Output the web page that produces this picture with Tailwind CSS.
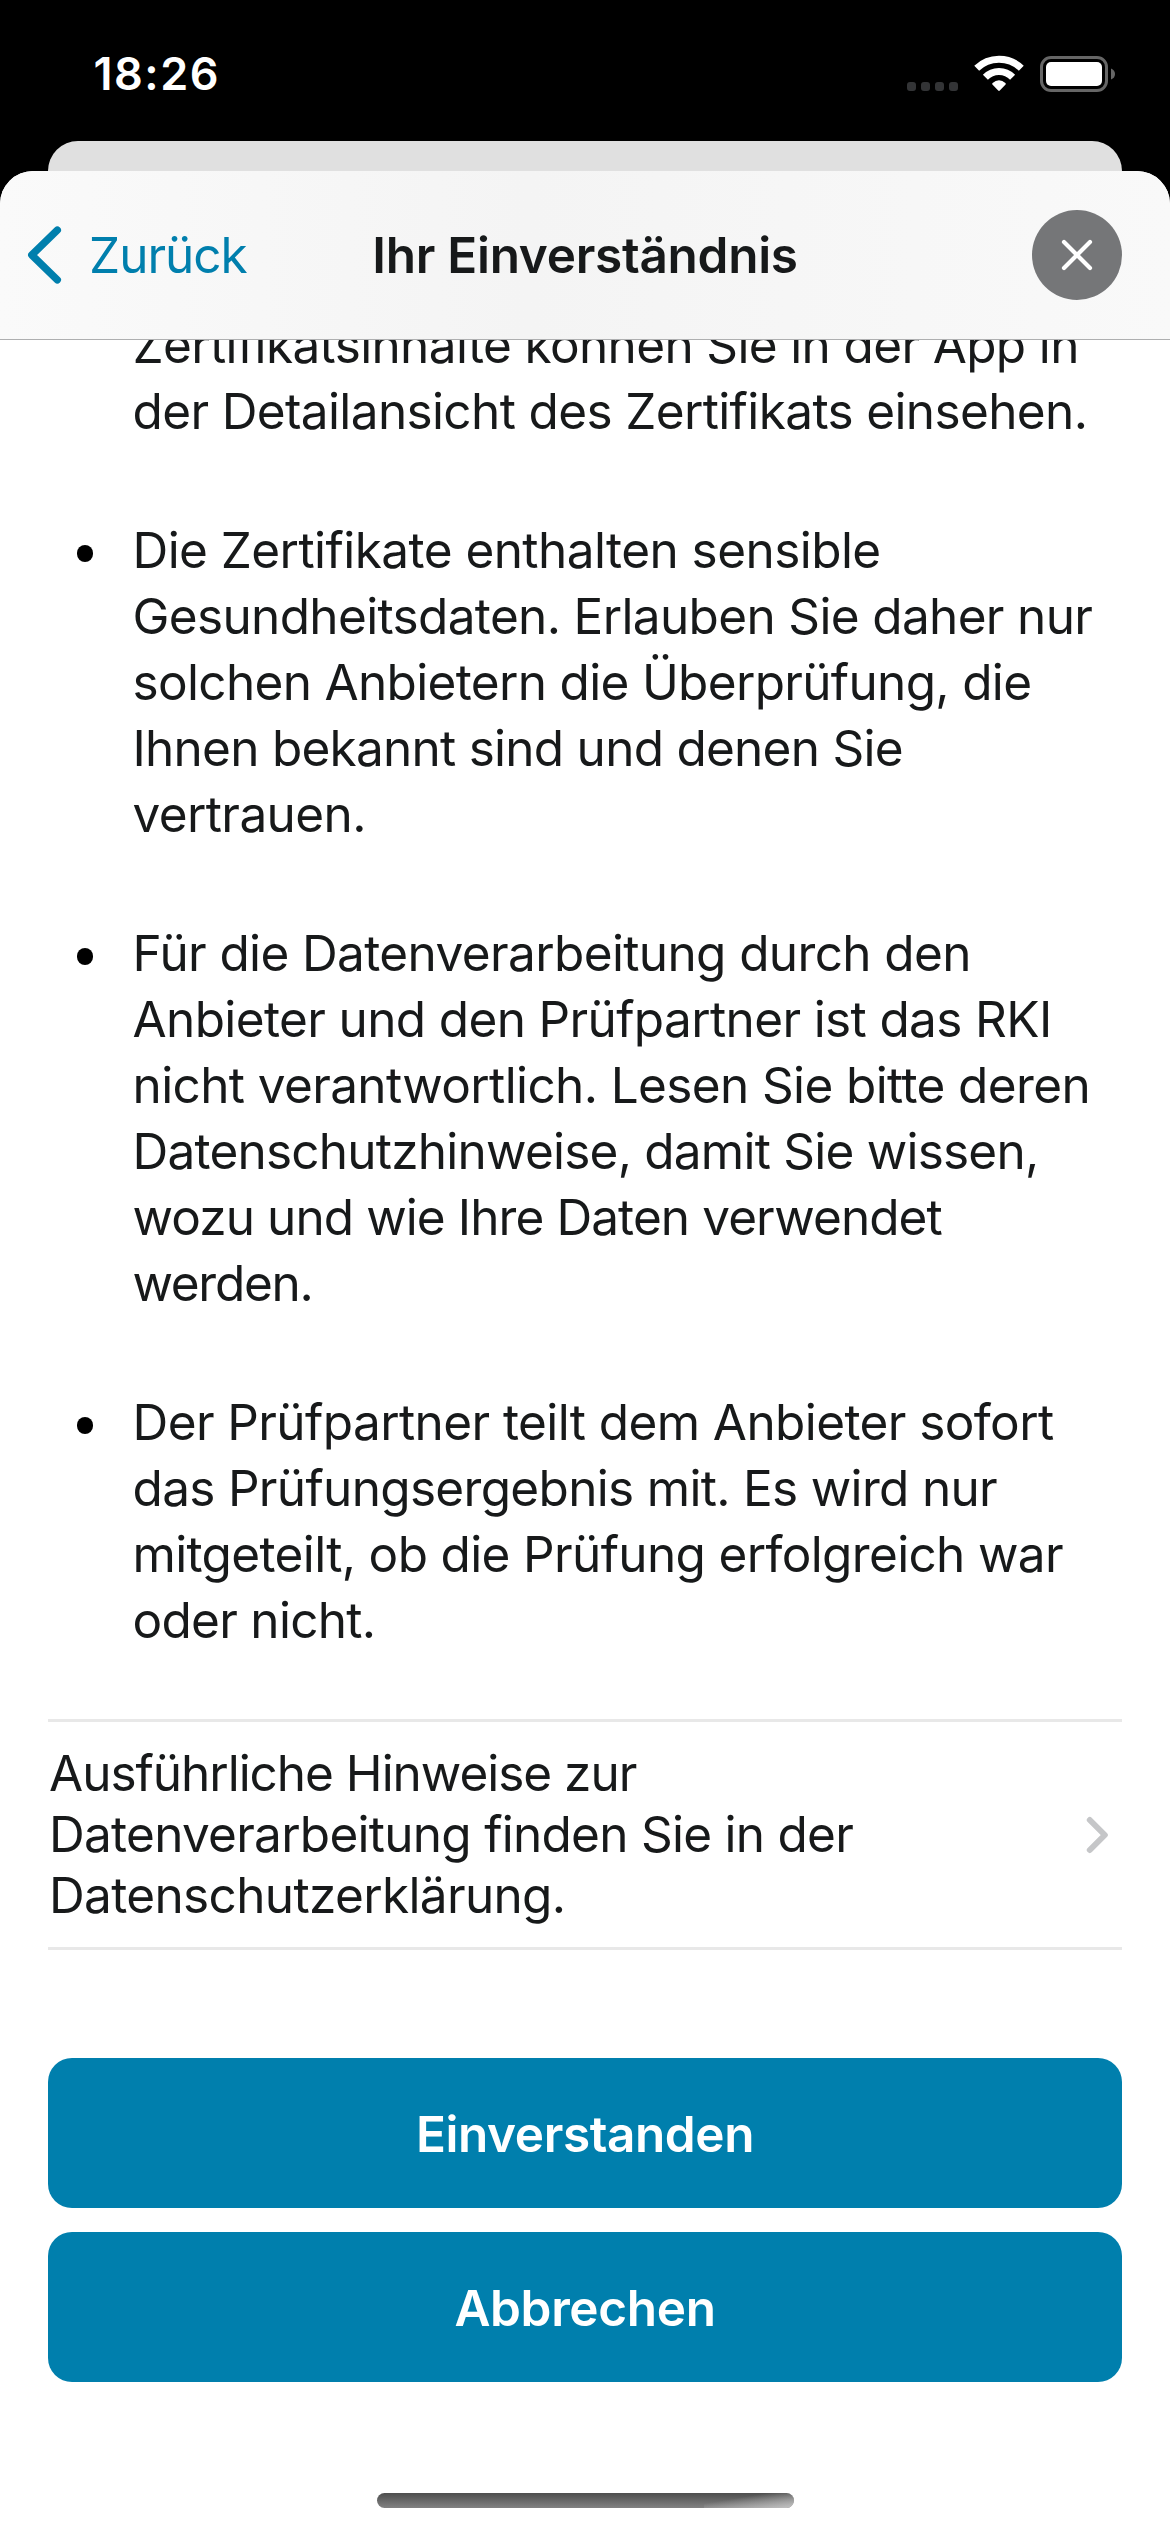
<!DOCTYPE html>
<html lang="de">
<head>
<meta charset="utf-8">
<title>Ihr Einverständnis</title>
<script src="https://cdn.jsdelivr.net/npm/@tailwindcss/browser@4"></script>
</head>
<body class="bg-black">
<div class="flex h-[2532px] w-[1170px] flex-col overflow-hidden bg-black font-['Inter',sans-serif] text-[49.5px] leading-[66px] text-[#17191a]">

  <!-- Status bar -->
  <div class="flex h-[141px] shrink-0 items-start justify-between pt-[47px] pr-[54px] pl-[93.5px]">
    <span class="text-[45px] leading-[54px] font-semibold tracking-[1.5px] text-white">18:26</span>
    <svg class="h-[40px] w-[210px]" viewBox="906 47 210 40" overflow="visible">
      <g fill="#333436" transform="translate(0 0)">
        <rect x="907" y="82" width="9" height="9" rx="3"/>
        <rect x="921" y="82" width="9" height="9" rx="3"/>
        <rect x="935" y="82" width="9" height="9" rx="3"/>
        <rect x="949" y="82" width="9" height="9" rx="3"/>
      </g>
      <g fill="none" stroke="#fff" stroke-width="7">
        <path d="M976.7 68.2A32 32 0 0 1 1021.3 68.2"/>
        <path d="M985.4 77.3A19 19 0 0 1 1012.6 77.3"/>
      </g>
      <path fill="#fff" d="M992.4 84.6Q991.8 83.8 992.6 83.1Q995.6 80.3 999 80.3Q1002.4 80.3 1005.4 83.1Q1006.2 83.8 1005.6 84.6L999.8 90.5Q999 91.3 998.2 90.5Z"/>
      <rect x="1041.5" y="57.5" width="65" height="33" rx="9.5" fill="none" stroke="#666" stroke-width="3"/>
      <rect x="1046" y="62" width="56" height="24" rx="5" fill="#fff"/>
      <path fill="#666" d="M1111 68.5Q1115 70 1115 74T1111 79.5Z"/>
    </svg>
  </div>

  <!-- Edge of the sheet underneath -->
  <div class="mx-[48px] h-[30px] shrink-0 rounded-t-[30px] bg-[#e0e0e0]"></div>

  <!-- Modal sheet -->
  <div class="flex grow flex-col overflow-hidden rounded-t-[33px] bg-white">
    <header class="grid h-[169px] shrink-0 grid-cols-[1fr_auto_1fr] items-center border-b border-[#aeafb0] bg-linear-to-r from-[#fafafa] via-[#f4f4f4] via-45% to-[#f9f9f9] pr-[48px] pl-[26px]">
      <a class="flex items-center gap-[27px] text-[#007fad]">
        <svg class="h-[60px] w-[36px]" viewBox="26 225 36 60" fill="none" stroke="currentColor" stroke-width="7.4" stroke-linecap="round" stroke-linejoin="round"><path d="M57.3 230.2L31.8 255L57.3 279.8"/></svg>
        <span class="tracking-[-1px]">Zurück</span>
      </a>
      <h1 class="pl-[22px] font-semibold tracking-[-0.28px]">Ihr Einverständnis</h1>
      <button class="flex h-[90px] w-[90px] items-center justify-center justify-self-end rounded-full bg-[#757678]">
        <svg class="h-[32px] w-[32px]" viewBox="0 0 32 32" fill="none" stroke="#fff" stroke-width="4.2" stroke-linecap="round"><path d="M3 3L29 29M29 3L3 29"/></svg>
      </button>
    </header>

    <main class="flex flex-col overflow-hidden">
      <ul class="-mt-[28px] flex flex-col gap-[73px] pl-[76.5px] whitespace-nowrap">
        <li class="flex gap-[39.5px]">
          <span class="mt-[28px] h-[16.5px] w-[16.5px] shrink-0"></span>
          <p>
            <span class="block tracking-[-0.64px]">Zertifikatsinhalte können Sie in der App in</span>
            <span class="block tracking-[-0.63px]">der Detailansicht des Zertifikats einsehen.</span>
          </p>
        </li>
        <li class="flex gap-[39.5px]">
          <span class="mt-[28px] h-[16.5px] w-[16.5px] shrink-0 rounded-full bg-black"></span>
          <p>
            <span class="block tracking-[-0.56px]">Die Zertifikate enthalten sensible</span>
            <span class="block tracking-[-0.65px]">Gesundheitsdaten. Erlauben Sie daher nur</span>
            <span class="block tracking-[-0.67px]">solchen Anbietern die Überprüfung, die</span>
            <span class="block tracking-[-0.74px]">Ihnen bekannt sind und denen Sie</span>
            <span class="block tracking-[-0.61px]">vertrauen.</span>
          </p>
        </li>
        <li class="flex gap-[39.5px]">
          <span class="mt-[28px] h-[16.5px] w-[16.5px] shrink-0 rounded-full bg-black"></span>
          <p>
            <span class="block tracking-[-0.62px]">Für die Datenverarbeitung durch den</span>
            <span class="block tracking-[-0.63px]">Anbieter und den Prüfpartner ist das RKI</span>
            <span class="block tracking-[-0.62px]">nicht verantwortlich. Lesen Sie bitte deren</span>
            <span class="block tracking-[-0.77px]">Datenschutzhinweise, damit Sie wissen,</span>
            <span class="block tracking-[-0.91px]">wozu und wie Ihre Daten verwendet</span>
            <span class="block tracking-[-1.3px]">werden.</span>
          </p>
        </li>
        <li class="flex gap-[39.5px]">
          <span class="mt-[28px] h-[16.5px] w-[16.5px] shrink-0 rounded-full bg-black"></span>
          <p>
            <span class="block tracking-[-0.59px]">Der Prüfpartner teilt dem Anbieter sofort</span>
            <span class="block tracking-[-0.68px]">das Prüfungsergebnis mit. Es wird nur</span>
            <span class="block tracking-[-0.65px]">mitgeteilt, ob die Prüfung erfolgreich war</span>
            <span class="block tracking-[-0.71px]">oder nicht.</span>
          </p>
        </li>
      </ul>

      <!-- Link to the privacy policy -->
      <a class="mx-[48px] mt-[66px] flex h-[231px] items-center justify-between border-y-[3px] border-[#e8e8e8] pr-[12px] pl-px leading-[60.67px] whitespace-nowrap">
        <p>
          <span class="block tracking-[-1.02px]">Ausführliche Hinweise zur</span>
          <span class="block tracking-[-0.73px]">Datenverarbeitung finden Sie in der</span>
          <span class="block tracking-[-0.65px]">Datenschutzerklärung.</span>
        </p>
        <svg class="h-[38px] w-[24px]" viewBox="0 0 24 38" fill="none" stroke="#c5c6c8" stroke-width="6" stroke-linecap="round" stroke-linejoin="round"><path d="M3.8 4L18.8 19L3.8 34"/></svg>
      </a>

      <div class="mx-[48px] mt-[108px] flex flex-col gap-6 font-semibold text-white">
        <button class="h-[150px] rounded-3xl bg-[#007fad] pt-[2px] tracking-[-0.42px]">Einverstanden</button>
        <button class="h-[150px] rounded-3xl bg-[#007fad] pt-[2px] tracking-[-0.35px]">Abbrechen</button>
      </div>

      <!-- Home indicator -->
      <div class="mx-auto mt-[111px] h-[15px] w-[417px] overflow-hidden rounded-full bg-linear-to-b from-[#4e4e4e] to-[#828282]">
        <div class="ml-auto h-full w-[90px] bg-linear-to-br from-transparent from-35% to-[#c4c4c4]"></div>
      </div>
    </main>
  </div>
</div>
</body>
</html>
